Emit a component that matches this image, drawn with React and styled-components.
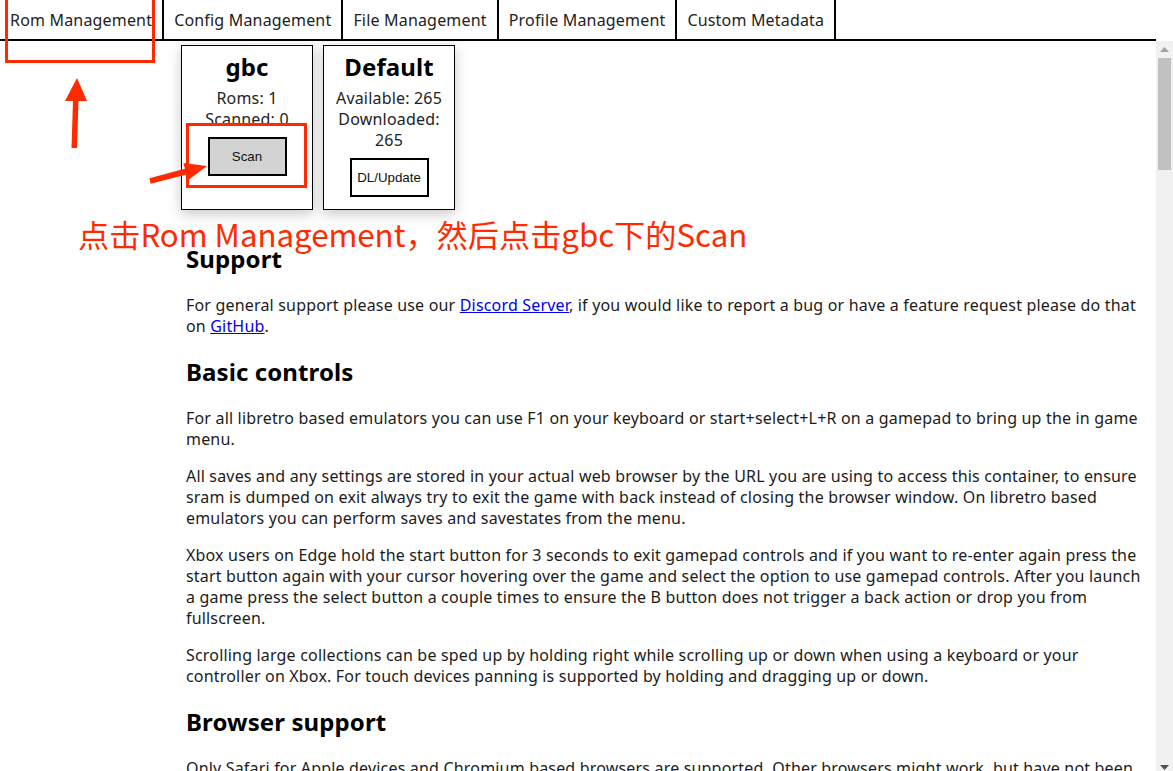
import React from "react";
import styled, { createGlobalStyle } from "styled-components";

const GlobalStyle = createGlobalStyle`
  html, body { margin: 0; padding: 0; background: #fff; }
  body {
    font-family: "Noto Sans", "Noto Sans CJK SC", sans-serif;
    font-size: 16px;
    letter-spacing: 0.18px;
    color: #1b1b1b;
  }
`;

const RED = "#ff2a00";

const Page = styled.div`
  position: relative;
  height: 100vh;
  display: flex;
  flex-direction: column;
  overflow: hidden;
`;

const TabBar = styled.nav`
  display: flex;
  height: 39px;
  margin-right: 17px;
  border-bottom: 2px solid #000;
  flex: none;
`;

const Tab = styled.div`
  display: flex;
  align-items: center;
  padding: 0 10px;
  border-right: 2px solid #000;
  color: #222;
  font-size: 16px;
  white-space: nowrap;
  cursor: pointer;
`;

const Body = styled.div`
  flex: 1;
  min-height: 0;
  display: flex;
`;

const Scroller = styled.main`
  flex: 1;
  min-width: 0;
  overflow-y: auto;
  scrollbar-width: none;
  &::-webkit-scrollbar { display: none; }
`;

const Rail = styled.div`
  flex: none;
  width: 17px;
  background: #f1f1f1;
  display: flex;
  flex-direction: column;
`;

const RailButton = styled.div`
  flex: none;
  height: 17px;
  display: flex;
  justify-content: center;
  align-items: ${(p) => (p.$down ? "flex-end" : "center")};
  padding-bottom: ${(p) => (p.$down ? "1px" : "0")};
  box-sizing: border-box;
`;

const Track = styled.div`
  flex: 1;
  padding: 0 2px;
`;

const Thumb = styled.div`
  height: 112px;
  background: #c1c1c1;
`;

const Content = styled.div`
  padding: 0 10px 40px 186px;
`;

const CardRow = styled.section`
  display: flex;
  gap: 10px;
  margin: 4px 0 33px -5px;
`;

const Card = styled.div`
  width: 132px;
  box-sizing: border-box;
  border: 1px solid #000;
  background: #fff;
  box-shadow: 0 4px 12px rgba(0, 0, 0, 0.22);
  padding: 5px 4px 12px;
  display: flex;
  flex-direction: column;
  align-items: center;
  text-align: center;
`;

const CardTitle = styled.div`
  font-size: 24px;
  font-weight: 700;
  line-height: 32px;
  color: #000;
  margin-bottom: 5px;
  letter-spacing: 0.1px;
`;

const Stat = styled.div`
  font-size: 16px;
  line-height: 21px;
  color: #222;
`;

const ActionButton = styled.button`
  position: relative;
  z-index: 2;
  margin-top: 7px;
  width: 79px;
  height: 39px;
  box-sizing: border-box;
  border: 2px solid #000;
  background: ${(p) => (p.$primary ? "#d3d3d3" : "#fff")};
  font-family: "Liberation Sans", Arial, sans-serif;
  font-size: 13.33px;
  letter-spacing: 0;
  color: #111;
  padding: 0;
  cursor: pointer;
`;

const H2 = styled.h2`
  font-size: 24px;
  font-weight: 700;
  line-height: 32px;
  margin: 19px 0 19.92px;
  color: #000;
  letter-spacing: 0.1px;
`;

const P = styled.p`
  font-size: 16px;
  line-height: 21px;
  margin: 16px 0;
`;

const Link = styled.a`
  color: #0000ee;
  text-decoration: underline;
`;

/* ---- annotation overlay ---- */
const Highlight = styled.div`
  position: absolute;
  left: ${(p) => p.$x}px;
  top: ${(p) => p.$y}px;
  width: ${(p) => p.$w}px;
  height: ${(p) => p.$h}px;
  box-sizing: border-box;
  border: 3px solid ${RED};
  background: ${(p) => (p.$fill ? "#fff" : "transparent")};
  z-index: 1;
  pointer-events: none;
`;

const Arrows = styled.svg`
  position: absolute;
  left: 0;
  top: 0;
  width: 100%;
  height: 100%;
  z-index: 3;
  pointer-events: none;
`;

const Note = styled.div`
  position: absolute;
  left: 78px;
  top: 216px;
  z-index: 3;
  font-family: "Noto Sans CJK SC", sans-serif;
  font-size: 31.2px;
  line-height: 36px;
  letter-spacing: 0;
  color: ${RED};
  white-space: nowrap;
  pointer-events: none;
`;

const tabs = [
  "Rom Management",
  "Config Management",
  "File Management",
  "Profile Management",
  "Custom Metadata",
];

export default function App() {
  return (
    <Page>
      <GlobalStyle />
      <TabBar>
        {tabs.map((t) => (
          <Tab key={t}>{t}</Tab>
        ))}
      </TabBar>
      <Body>
        <Scroller>
          <Content>
            <CardRow>
              <Card>
                <CardTitle>gbc</CardTitle>
                <Stat>Roms: 1</Stat>
                <Stat>Scanned: 0</Stat>
                <ActionButton $primary>Scan</ActionButton>
              </Card>
              <Card>
                <CardTitle>Default</CardTitle>
                <Stat>Available: 265</Stat>
                <Stat>Downloaded: 265</Stat>
                <ActionButton>DL/Update</ActionButton>
              </Card>
            </CardRow>

            <H2>Support</H2>
            <P>
              For general support please use our <Link href="#">Discord Server</Link>, if you
              would like to report a bug or have a feature request please do that on{" "}
              <Link href="#">GitHub</Link>.
            </P>

            <H2>Basic controls</H2>
            <P>
              For all libretro based emulators you can use F1 on your keyboard or
              start+select+L+R on a gamepad to bring up the in game menu.
            </P>
            <P>
              All saves and any settings are stored in your actual web browser by the URL you
              are using to access this container, to ensure sram is dumped on exit always try to
              exit the game with back instead of closing the browser window. On libretro based
              emulators you can perform saves and savestates from the menu.
            </P>
            <P>
              Xbox users on Edge hold the start button for 3 seconds to exit gamepad controls and
              if you want to re-enter again press the start button again with your cursor hovering
              over the game and select the option to use gamepad controls. After you launch a game
              press the select button a couple times to ensure the B button does not trigger a back
              action or drop you from fullscreen.
            </P>
            <P>
              Scrolling large collections can be sped up by holding right while scrolling up or
              down when using a keyboard or your controller on Xbox. For touch devices panning is
              supported by holding and dragging up or down.
            </P>

            <H2>Browser support</H2>
            <P>
              Only Safari for Apple devices and Chromium based browsers are supported. Other
              browsers might work, but have not been tested.
            </P>
          </Content>
        </Scroller>
        <Rail>
          <RailButton>
            <svg width="9" height="5" viewBox="0 0 9 5">
              <polygon points="0,5 9,5 4.5,0" fill="#a3a3a3" />
            </svg>
          </RailButton>
          <Track>
            <Thumb />
          </Track>
          <RailButton $down>
            <svg width="9" height="5" viewBox="0 0 9 5">
              <polygon points="0,0 9,0 4.5,5" fill="#505050" />
            </svg>
          </RailButton>
        </Rail>
      </Body>

      <Highlight $x={5} $y={-5} $w={150} $h={68} />
      <Highlight $x={186} $y={123} $w={121} $h={65} $fill />
      <Arrows viewBox="0 0 1173 771">
        <polygon
          points="71.5,148 77,148 78.5,101 87,101 77,78 65,101 73,101"
          fill={RED}
        />
        <polygon
          points="149.4,178.2 184.9,168.7 183.4,162.9 207,166 188,180.3 186.5,174.5 150.6,183.8"
          fill={RED}
        />
      </Arrows>
      <Note>点击Rom Management，然后点击gbc下的Scan</Note>
    </Page>
  );
}
